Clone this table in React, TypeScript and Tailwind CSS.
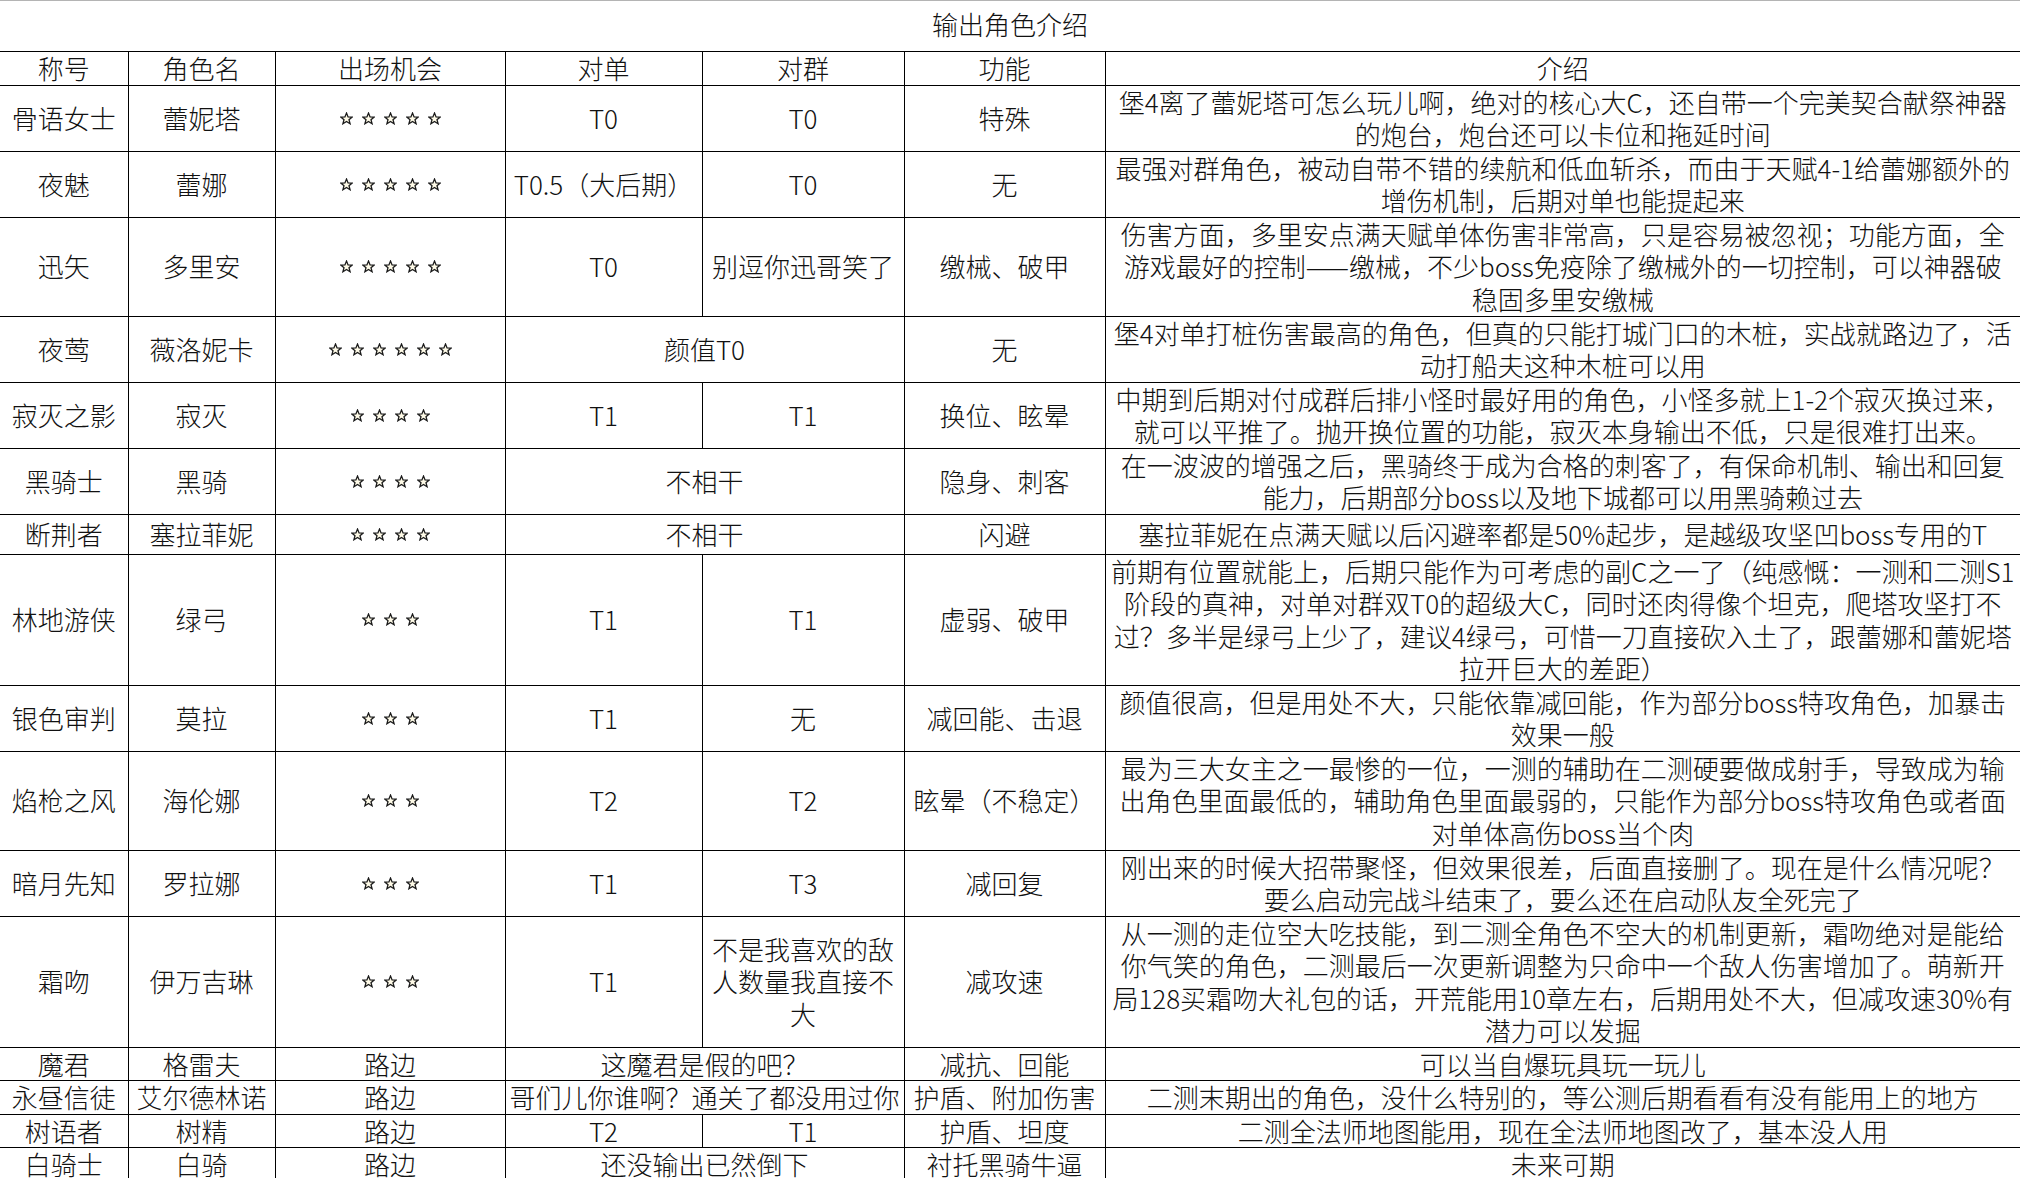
import React from 'react'

type Row = {
  title: string
  name: string
  stars?: number
  chance?: string
  single?: string
  group?: string
  merged?: string
  func: string
  intro: string[]
  h: string
}

const rows: Row[] = [
  {
    title: '骨语女士',
    name: '蕾妮塔',
    stars: 5,
    single: 'T0',
    group: 'T0',
    func: '特殊',
    intro: ['堡4离了蕾妮塔可怎么玩儿啊，绝对的核心大C，还自带一个完美契合献祭神器', '的炮台，炮台还可以卡位和拖延时间'],
    h: 'h-[66px]',
  },
  {
    title: '夜魅',
    name: '蕾娜',
    stars: 5,
    single: 'T0.5（大后期）',
    group: 'T0',
    func: '无',
    intro: ['最强对群角色，被动自带不错的续航和低血斩杀，而由于天赋4-1给蕾娜额外的', '增伤机制，后期对单也能提起来'],
    h: 'h-[66px]',
  },
  {
    title: '迅矢',
    name: '多里安',
    stars: 5,
    single: 'T0',
    group: '别逗你迅哥笑了',
    func: '缴械、破甲',
    intro: [
      '伤害方面，多里安点满天赋单体伤害非常高，只是容易被忽视；功能方面，全',
      '游戏最好的控制——缴械，不少boss免疫除了缴械外的一切控制，可以神器破',
      '稳固多里安缴械',
    ],
    h: 'h-[99px]',
  },
  {
    title: '夜莺',
    name: '薇洛妮卡',
    stars: 6,
    merged: '颜值T0',
    func: '无',
    intro: ['堡4对单打桩伤害最高的角色，但真的只能打城门口的木桩，实战就路边了，活', '动打船夫这种木桩可以用'],
    h: 'h-[66px]',
  },
  {
    title: '寂灭之影',
    name: '寂灭',
    stars: 4,
    single: 'T1',
    group: 'T1',
    func: '换位、眩晕',
    intro: ['中期到后期对付成群后排小怪时最好用的角色，小怪多就上1-2个寂灭换过来，', '就可以平推了。抛开换位置的功能，寂灭本身输出不低，只是很难打出来。'],
    h: 'h-[66px]',
  },
  {
    title: '黑骑士',
    name: '黑骑',
    stars: 4,
    merged: '不相干',
    func: '隐身、刺客',
    intro: ['在一波波的增强之后，黑骑终于成为合格的刺客了，有保命机制、输出和回复', '能力，后期部分boss以及地下城都可以用黑骑赖过去'],
    h: 'h-[66px]',
  },
  {
    title: '断荆者',
    name: '塞拉菲妮',
    stars: 4,
    merged: '不相干',
    func: '闪避',
    intro: ['塞拉菲妮在点满天赋以后闪避率都是50%起步，是越级攻坚凹boss专用的T'],
    h: 'h-[40px]',
  },
  {
    title: '林地游侠',
    name: '绿弓',
    stars: 3,
    single: 'T1',
    group: 'T1',
    func: '虚弱、破甲',
    intro: [
      '前期有位置就能上，后期只能作为可考虑的副C之一了（纯感慨：一测和二测S1',
      '阶段的真神，对单对群双T0的超级大C，同时还肉得像个坦克，爬塔攻坚打不',
      '过？多半是绿弓上少了，建议4绿弓，可惜一刀直接砍入土了，跟蕾娜和蕾妮塔',
      '拉开巨大的差距）',
    ],
    h: 'h-[131px]',
  },
  {
    title: '银色审判',
    name: '莫拉',
    stars: 3,
    single: 'T1',
    group: '无',
    func: '减回能、击退',
    intro: ['颜值很高，但是用处不大，只能依靠减回能，作为部分boss特攻角色，加暴击', '效果一般'],
    h: 'h-[66px]',
  },
  {
    title: '焰枪之风',
    name: '海伦娜',
    stars: 3,
    single: 'T2',
    group: 'T2',
    func: '眩晕（不稳定）',
    intro: [
      '最为三大女主之一最惨的一位，一测的辅助在二测硬要做成射手，导致成为输',
      '出角色里面最低的，辅助角色里面最弱的，只能作为部分boss特攻角色或者面',
      '对单体高伤boss当个肉',
    ],
    h: 'h-[99px]',
  },
  {
    title: '暗月先知',
    name: '罗拉娜',
    stars: 3,
    single: 'T1',
    group: 'T3',
    func: '减回复',
    intro: ['刚出来的时候大招带聚怪，但效果很差，后面直接删了。现在是什么情况呢？', '要么启动完战斗结束了，要么还在启动队友全死完了'],
    h: 'h-[66px]',
  },
  {
    title: '霜吻',
    name: '伊万吉琳',
    stars: 3,
    single: 'T1',
    group: '不是我喜欢的敌\n人数量我直接不\n大',
    func: '减攻速',
    intro: [
      '从一测的走位空大吃技能，到二测全角色不空大的机制更新，霜吻绝对是能给',
      '你气笑的角色，二测最后一次更新调整为只命中一个敌人伤害增加了。萌新开',
      '局128买霜吻大礼包的话，开荒能用10章左右，后期用处不大，但减攻速30%有',
      '潜力可以发掘',
    ],
    h: 'h-[131px]',
  },
  {
    title: '魔君',
    name: '格雷夫',
    chance: '路边',
    merged: '这魔君是假的吧？',
    func: '减抗、回能',
    intro: ['可以当自爆玩具玩一玩儿'],
    h: 'h-[33px]',
  },
  {
    title: '永昼信徒',
    name: '艾尔德林诺',
    chance: '路边',
    merged: '哥们儿你谁啊？通关了都没用过你',
    func: '护盾、附加伤害',
    intro: ['二测末期出的角色，没什么特别的，等公测后期看看有没有能用上的地方'],
    h: 'h-[33px]',
  },
  {
    title: '树语者',
    name: '树精',
    chance: '路边',
    single: 'T2',
    group: 'T1',
    func: '护盾、坦度',
    intro: ['二测全法师地图能用，现在全法师地图改了，基本没人用'],
    h: 'h-[33px]',
  },
  {
    title: '白骑士',
    name: '白骑',
    chance: '路边',
    merged: '还没输出已然倒下',
    func: '衬托黑骑牛逼',
    intro: ['未来可期'],
    h: 'h-[33px]',
  },
]

function Stars({ n }: { n: number }) {
  return (
    <div className="flex items-center justify-center gap-[9px]">
      {Array.from({ length: n }).map((_, i) => (
        <svg key={i} viewBox="0 0 24 24" className="h-[13px] w-[13px]">
          <polygon
            points="12,2 14.9,9 22.5,9.4 16.6,14.2 18.6,21.6 12,17.4 5.4,21.6 7.4,14.2 1.5,9.4 9.1,9"
            fill="#fffbe8"
            stroke="#1a1a1a"
            strokeWidth="2.4"
            strokeLinejoin="miter"
          />
        </svg>
      ))}
    </div>
  )
}

function Lines({ text }: { text: string[] }) {
  return (
    <>
      {text.map((t, i) => (
        <React.Fragment key={i}>
          {i > 0 && <br />}
          {t}
        </React.Fragment>
      ))}
    </>
  )
}

const td = 'border border-black p-0 text-center align-middle whitespace-nowrap'

export default function App() {
  return (
    <div className="w-[2020px] h-[1178px] overflow-hidden bg-white text-[#111] font-['Noto_Sans_CJK_SC','Noto_Sans',sans-serif] text-[26px] leading-[32.5px] font-light">
      {/* title */}
      <div className="h-[51px] pb-[4px] border-t border-[#b4b4b4] flex items-center justify-center">
        输出角色介绍
      </div>

      <table className="w-[2020px] table-fixed border-collapse">
        <colgroup>
          <col className="w-[128px]" />
          <col className="w-[147px]" />
          <col className="w-[230px]" />
          <col className="w-[197px]" />
          <col className="w-[202px]" />
          <col className="w-[201px]" />
          <col />
        </colgroup>
        <thead>
          <tr className="h-[33px]">
            <th className={`${td} font-light border-l-0`}>称号</th>
            <th className={`${td} font-light`}>角色名</th>
            <th className={`${td} font-light`}>出场机会</th>
            <th className={`${td} font-light`}>对单</th>
            <th className={`${td} font-light`}>对群</th>
            <th className={`${td} font-light`}>功能</th>
            <th className={`${td} font-light border-r-0`}>介绍</th>
          </tr>
        </thead>
        <tbody>
          {rows.map((r) => (
            <tr key={r.title} className={r.h}>
              <td className={`${td} border-l-0`}>{r.title}</td>
              <td className={td}>{r.name}</td>
              <td className={td}>{r.stars ? <Stars n={r.stars} /> : r.chance}</td>
              {r.merged ? (
                <td className={td} colSpan={2}>
                  {r.merged}
                </td>
              ) : (
                <>
                  <td className={td}>{r.single}</td>
                  <td className={td}>
                    <Lines text={(r.group ?? '').split('\n')} />
                  </td>
                </>
              )}
              <td className={td}>{r.func}</td>
              <td className={`${td} border-r-0`}>
                <Lines text={r.intro} />
              </td>
            </tr>
          ))}
        </tbody>
      </table>
    </div>
  )
}
